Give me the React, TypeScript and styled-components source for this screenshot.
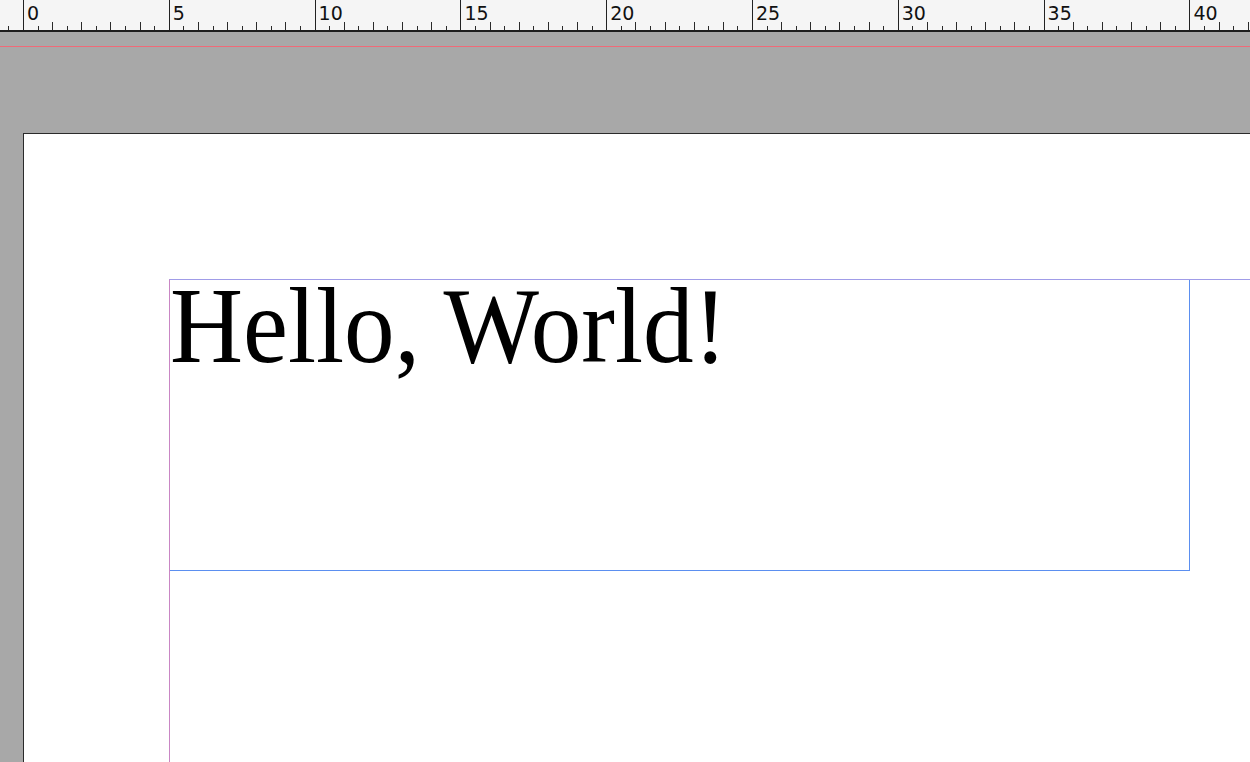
import React from "react";
import styled, { createGlobalStyle } from "styled-components";

const UNIT = 29.16;
const SEGMENT = UNIT * 5;

const Global = createGlobalStyle`
  html, body {
    margin: 0;
    padding: 0;
    height: 100%;
    overflow: hidden;
    background: #a8a8a8;
  }
  #root {
    height: 100%;
  }
`;

const Window = styled.div`
  display: flex;
  flex-direction: column;
  height: 100vh;
  overflow: hidden;
`;

const Ruler = styled.div`
  flex: 0 0 30px;
  display: flex;
  background: #f5f5f5;
  border-bottom: 2px solid #1e1e1e;
  overflow: hidden;
  font-family: "DejaVu Sans", "Liberation Sans", sans-serif;
`;

const RulerTrack = styled.div`
  display: flex;
  margin-left: ${23 - SEGMENT}px;
`;

const Segment = styled.div`
  position: relative;
  flex: 0 0 ${SEGMENT}px;
  display: flex;
  border-left: 1px solid #222;
  box-sizing: border-box;
  height: 30px;
`;

const SegmentLabel = styled.span`
  position: absolute;
  left: 3px;
  top: 4px;
  font-size: 19px;
  line-height: 19px;
  color: #111;
`;

const TickCell = styled.div<{ $tall: boolean; $last: boolean }>`
  flex: 1 1 0;
  align-self: flex-end;
  height: ${(p) => (p.$tall ? 8 : 4)}px;
  border-right: ${(p) => (p.$last ? "none" : "1px solid #2a2a2a")};
`;

const Pasteboard = styled.div`
  flex: 1 1 auto;
  display: flex;
  flex-direction: column;
  background: #a8a8a8;
  padding-top: 14px;
  overflow: hidden;
`;

const RulerGuide = styled.div`
  flex: 0 0 1px;
  background: #f06a78;
`;

const Page = styled.div`
  flex: 1 1 auto;
  margin-top: 86px;
  margin-left: 23px;
  background: #ffffff;
  border-top: 1px solid #2b2b2b;
  border-left: 1px solid #2b2b2b;
  padding: 145px 0 0 145px;
  display: flex;
`;

const MarginArea = styled.div`
  flex: 1 1 auto;
  border-top: 1px solid #a09ce8;
  border-left: 1px solid #c986c4;
  display: flex;
  align-items: flex-start;
`;

const TextFrame = styled.div`
  box-sizing: border-box;
  width: 1020px;
  height: 291px;
  border-right: 1px solid #5b8ff0;
  border-bottom: 1px solid #5b8ff0;
`;

const Headline = styled.span`
  display: inline-block;
  font-family: "Liberation Serif", "Times New Roman", serif;
  font-size: 107px;
  line-height: 92px;
  color: #000;
  white-space: nowrap;
  transform: scaleX(0.945);
  transform-origin: left top;
`;

function RulerSegment({ label }: { label?: string }) {
  return (
    <Segment>
      {label !== undefined && <SegmentLabel>{label}</SegmentLabel>}
      {Array.from({ length: 10 }).map((_, i) => (
        <TickCell key={i} $tall={i % 2 === 1} $last={i === 9} />
      ))}
    </Segment>
  );
}

export default function App() {
  const labels = [undefined, "0", "5", "10", "15", "20", "25", "30", "35", "40"];
  return (
    <>
      <Global />
      <Window>
        <Ruler>
          <RulerTrack>
            {labels.map((l, i) => (
              <RulerSegment key={i} label={l} />
            ))}
          </RulerTrack>
        </Ruler>
        <Pasteboard>
          <RulerGuide />
          <Page>
            <MarginArea>
              <TextFrame>
                <Headline>Hello, World!</Headline>
              </TextFrame>
            </MarginArea>
          </Page>
        </Pasteboard>
      </Window>
    </>
  );
}
